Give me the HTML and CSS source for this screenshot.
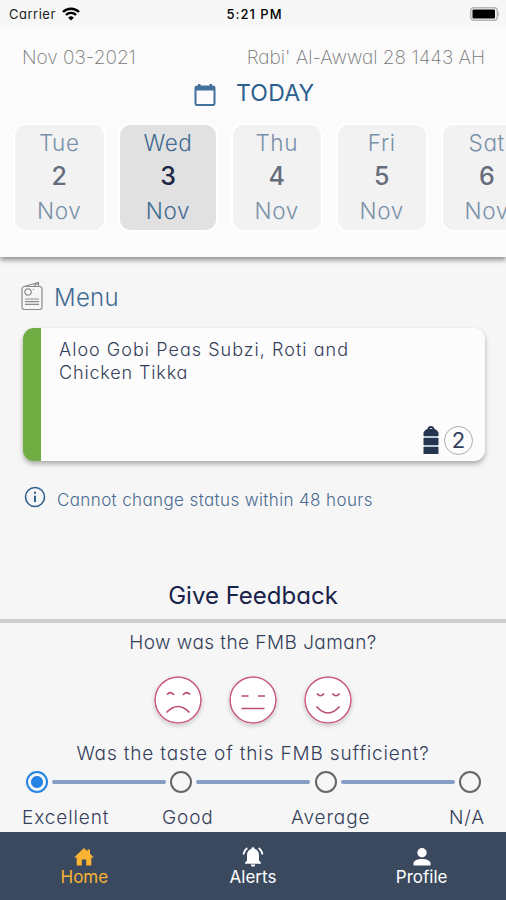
FILE: index.html
```html
<!DOCTYPE html>
<html lang="en">
<head>
<meta charset="utf-8">
<title>FMB Menu</title>
<link rel="stylesheet" href="styles.css">
</head>
<body>
<div class="app">
  <header class="header">
    <div class="status">
      <div class="carrier"><span>Carrier</span>
        <svg width="18" height="14" viewBox="0 0 18 14" fill="none" stroke="#000" stroke-width="2.4"><path d="M1 5a11.3 11.3 0 0 1 16 0M3.9 8a7.2 7.2 0 0 1 10.2 0"/><path d="M9 13.5 6.2 10.700a4 4 0 0 1 5.600 0z" fill="#000" stroke="none"/></svg>
      </div>
      <span class="clock">5:21 PM</span>
      <svg class="battery" width="30" height="14" viewBox="0 0 30 14"><rect x="0.700" y="0.700" width="26.600" height="12.600" rx="3" fill="#f7f7f7" stroke="#b5b5b5" stroke-width="1.400"/><rect x="2.500" y="2.500" width="22.500" height="9" rx="1" fill="#000"/><path d="M28.300 4.500q2 2.500 0 5z" fill="#aaa"/></svg>
    </div>
    <div class="dates"><span class="greg">Nov 03-2021</span><span class="hijri">Rabi' Al-Awwal 28 1443 AH</span></div>
    <div class="today">
      <svg width="22" height="24" viewBox="0 0 22 24"><rect x="1.500" y="3.500" width="19" height="18.500" rx="1.800" fill="none" stroke="#41719b" stroke-width="2"/><path d="M1 3h20v4.500H1zM4 1h2.500v3H4zM15.500 1H18v3h-2.500z" fill="#41719b"/></svg>
      <span>TODAY</span>
    </div>
    <div class="days">
      <div class="day"><span>Tue</span><b>2</b><span>Nov</span></div>
      <div class="day selected"><span>Wed</span><b>3</b><span>Nov</span></div>
      <div class="day"><span>Thu</span><b>4</b><span>Nov</span></div>
      <div class="day"><span>Fri</span><b>5</b><span>Nov</span></div>
      <div class="day"><span>Sat</span><b>6</b><span>Nov</span></div>
    </div>
  </header>

  <main>
    <div class="menu-title">
      <svg width="22" height="30" viewBox="0 0 22 30" fill="none" stroke="#8c8c8c" stroke-width="1.200"><rect x="1" y="5.500" width="20" height="23" rx="2.500"/><path d="M3 5.500 17.500 1.500V5M13 5l4.500-3.500M12 8.500h1M4 18h14M4 20.700h14M4 23.400h14"/><circle cx="7" cy="11" r="3.200"/></svg>
      <span>Menu</span>
    </div>
    <section class="card">
      <p><span class="l1">Aloo Gobi Peas Subzi, Roti and</span><br><span class="l2">Chicken Tikka</span></p>
      <div class="count">
        <svg width="16" height="29" viewBox="0 0 16 29"><path d="M5.500 3.500a2.500 2.500 0 0 1 5 0" fill="none" stroke="#25344f" stroke-width="2"/><path d="M.5 10V6.500Q2.500 3 5 3h6q2.500 0 4.500 3.500V10zM.5 12h15v7H.5zM.5 21h15v7H.5z" fill="#25344f"/><path d="M1 11h14M1 20h14" stroke="#7798ad" stroke-width="1"/></svg>
        <span>2</span>
      </div>
    </section>
    <div class="notice">
      <svg width="22" height="22" viewBox="0 0 22 22"><circle cx="11" cy="11" r="9.500" fill="none" stroke="#326291" stroke-width="1.600"/><path d="M11 9.700v6.300M11 5.700v2.100" stroke="#326291" stroke-width="2"/></svg>
      <span>Cannot change status within 48 hours</span>
    </div>
    <h2><span>Give Feedback</span></h2>
    <div class="question q1"><span>How was the FMB Jaman?</span></div>
    <div class="faces">
      <svg viewBox="0 0 48 48"><circle cx="24" cy="24" r="23"/><path d="M13 18.500q3.500-4 7 0.500M29 19q3.500-4.500 7-.5M12.500 36.500q11.500-12 23 0"/></svg>
      <svg viewBox="0 0 48 48"><circle cx="24" cy="24" r="23"/><path d="M12.500 20h7M29 20h7M12.500 32.500h23"/></svg>
      <svg viewBox="0 0 48 48"><circle cx="24" cy="24" r="23"/><path d="M13 17.500q3.500 4.500 7 0M28.500 17.500q3.500 4.500 7 0M12.500 30.500q11.500 13 23 0"/></svg>
    </div>
    <div class="question q2"><span>Was the taste of this FMB sufficient?</span></div>
    <div class="scale"><i class="on"></i><hr><i></i><hr><i></i><hr><i></i></div>
    <div class="labels"><span class="e">Excellent</span><span class="g">Good</span><span class="a">Average</span><span class="n">N/A</span></div>
  </main>

  <nav>
    <div class="active"><svg width="20" height="20" viewBox="0 0 20 20"><path d="M10 1 0 10.500h2.700V18.500h5.100v-6h4.400v6h5.100v-8H20L16 6.700V2.500h-2.500v1.800z" fill="currentColor"/></svg><span>Home</span></div>
    <div><svg width="22" height="22" viewBox="0 0 22 22"><path d="M11 1.200c1 0 1.700.7 1.700 1.700C15.500 3.700 17 6 17 9v5.500l2 2.300v.9H3v-.9l2-2.300V9c0-3 1.500-5.300 4.300-6.100 0-1 .7-1.700 1.700-1.700zM8.800 18.500h4.400a2.200 2.200 0 0 1-4.400 0z" fill="currentColor"/><path d="M5.300 2Q2 4.500 1.500 8.500M16.700 2Q20 4.500 20.500 8.500" fill="none" stroke="currentColor" stroke-width="1.700"/></svg><span>Alerts</span></div>
    <div><svg width="18" height="20" viewBox="0 0 18 20"><circle cx="9" cy="5.700" r="4.700" fill="currentColor"/><path d="M.5 18.500v-2.300C.5 13.500 5 12 9 12s8.500 1.500 8.500 4.200v2.300z" fill="currentColor"/></svg><span>Profile</span></div>
  </nav>
</div>
</body>
</html>
```
FILE: styles.css
```css
* { box-sizing: border-box; }
body { margin: 0; font-family: Inter, "Open Sans", sans-serif; font-weight: 300; font-feature-settings: "cv11"; color: #34405a; }
svg { display: block; flex: none; }
span { white-space: nowrap; }
.app { width: 506px; height: 900px; overflow: hidden; background: #f6f6f6; display: flex; flex-direction: column; }
.header { height: 257px; flex: none; background: #fbfbfb; box-shadow: 0 3px 5px rgba(0,0,0,.42); }
.status { height: 27px; background: #f7f7f7; display: grid; grid-template-columns: 1fr auto 1fr; align-items: center; padding: 0 6px 0 9px; font-size: 13px; color: #222; font-weight: 400; }
.carrier { display: flex; align-items: center; gap: 6px; letter-spacing: .5px; }
.clock { color: #000; font-weight: 500; letter-spacing: 1px; }
.battery { justify-self: end; }
.dates { height: 40px; margin-top: 11px; padding: 0 21px 0 22px; display: flex; justify-content: space-between; line-height: 40px; font-size: 19px; font-weight: 200; color: #777; }
.today { height: 36px; margin-top: -3px; display: flex; align-items: center; padding-left: 194px; gap: 20px; font-size: 23px; color: #2c608f; font-weight: 400; letter-spacing: .2px; }
.today svg { margin-top: 3px; }
.days { display: flex; gap: 16.500px; padding: 14px 0 0 15px; width: 506px; overflow: hidden; height: 126px; }
.day { width: 88.500px; height: 105px; flex: none; border-radius: 10px; background: #f2f2f2; box-shadow: 0 0 0 2px #fff; display: grid; grid-template-rows: 34px 33px 37px; justify-items: center; align-items: center; font-size: 22.500px; letter-spacing: .6px; color: #7990a9; }
.day b { font-size: 25px; font-weight: 500; letter-spacing: 0; color: #656d7b; }
.selected { width: 96px; background: #e1e1e1; color: #416b91; }
.selected b { color: #1c2545; }
main { height: 575px; flex: none; padding: 22px 21px 0; }
.menu-title { display: flex; align-items: center; gap: 11px; height: 36px; color: #426a91; font-size: 24px; letter-spacing: .3px; }
.menu-title svg { margin-top: -3px; }
.card { height: 133px; margin: 13px 0 0 2px; border-left: 18px solid #70ad43; border-radius: 11px; background: #fcfcfc; box-shadow: 0 3px 5px rgba(0,0,0,.3); padding: 10px 12px 6px 18px; display: flex; flex-direction: column; justify-content: space-between; }
.card p { margin: 0; font-size: 18px; line-height: 23px; letter-spacing: 1.030px; }
.l2 { letter-spacing: .850px; }
.count { display: flex; justify-content: flex-end; align-items: center; gap: 5px; }
.count > span { width: 29px; height: 29px; border: 1px solid #aaa; border-radius: 50%; font-size: 22px; font-weight: 400; line-height: 27px; text-align: center; }
.notice { display: flex; align-items: center; gap: 11px; height: 36px; margin: 18px 0 0 3px; font-size: 17px; letter-spacing: .380px; color: #4a6b91; }
.notice span { margin-top: 5px; }
h2 { margin: 61px -21px 0; height: 47px; border-bottom: 4px solid #ccc; text-align: center; line-height: 39px; font-size: 24px; font-weight: 400; color: #17224a; }
.question { text-align: center; font-size: 19px; line-height: 24px; letter-spacing: .450px; }
.q1 { padding-top: 8px; }
.faces { display: flex; justify-content: center; gap: 27px; margin-top: 21px; }
.faces svg { width: 48px; height: 48px; border-radius: 50%; box-shadow: 0 2px 4px rgba(0,0,0,.18); }
.faces circle { fill: #fff; stroke: #c95a79; stroke-width: 1.600; }
.faces path { fill: none; stroke: #bb4d70; stroke-width: 1.700; }
.q2 { padding-top: 18px; letter-spacing: .850px; }
.scale { display: flex; align-items: center; justify-content: space-between; padding: 0 4px 0 5px; height: 24px; margin-top: 4px; }
.scale i { width: 22px; height: 22px; border: 2px solid #666; border-radius: 50%; }
.scale .on { border-color: #2583e5; background: radial-gradient(circle, #2583e5 5.500px, transparent 6.500px); }
.scale hr { width: 114px; height: 4px; margin: 0; border: 0; border-radius: 2px; background: #869fc4; }
.labels { display: grid; grid-template-columns: 140px 129px 1fr auto; padding: 0 0 0 1px; margin-top: 11px; line-height: 26px; font-size: 19px; letter-spacing: .900px; }
nav { height: 68px; background: #3a495e; color: #fff; display: grid; grid-template-columns: repeat(3, 1fr); }
nav div { display: grid; grid-template-rows: 20px 20px; justify-items: center; align-items: center; padding-top: 15px; align-content: start; font-size: 17px; font-weight: 400; }
.active { color: #f9b434; }
```
